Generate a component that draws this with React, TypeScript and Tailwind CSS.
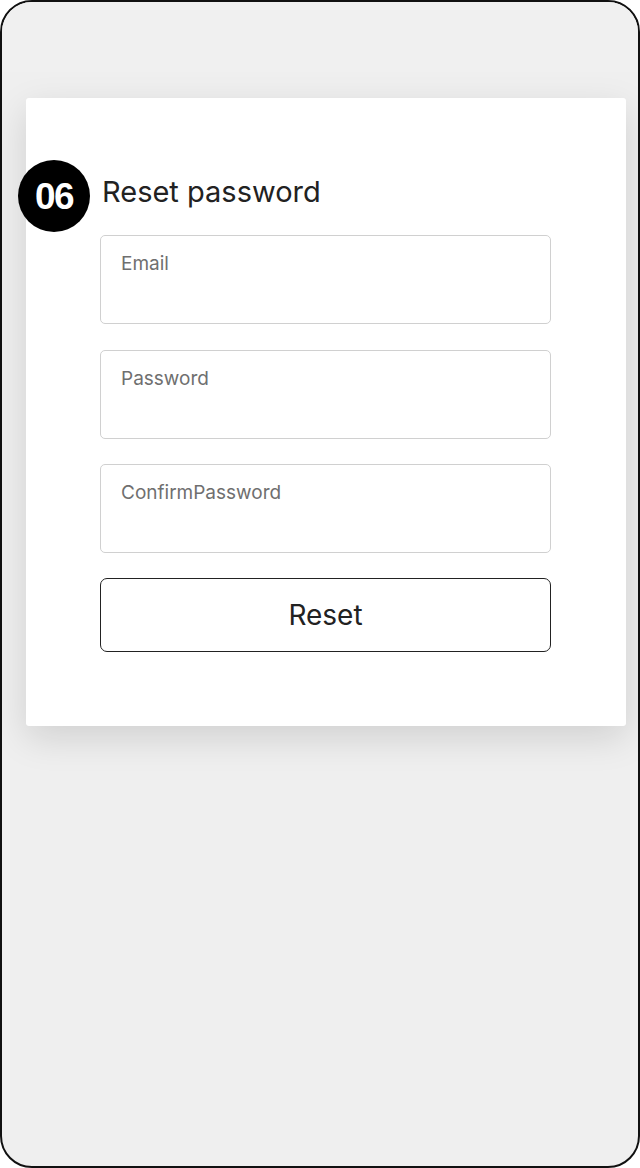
export default function App() {
  const fields = ['Email', 'Password', 'ConfirmPassword']

  return (
    <div className="h-[1168px] w-[640px] bg-white">
      <div className="flex h-full w-full flex-col overflow-hidden rounded-[32px] border-2 border-[#111] bg-[#efefef] font-['Inter','Roboto',sans-serif]">
        {/* top bar */}
        <div className="relative z-10 h-[70px] shrink-0 bg-[#f0f0f0]" />

        {/* card */}
        <div className="relative ml-[24px] mt-[26px] h-[628px] w-[600px] rounded-[3px] bg-white pl-[74px] pr-[74px] pt-[74px] shadow-[0_12px_36px_rgba(0,0,0,0.13)]">
          <div className="absolute left-[-8px] top-[62px] flex h-[72px] w-[72px] items-center justify-center rounded-full bg-black">
            <span className="font-['Liberation_Sans',Arial,sans-serif] text-[37px] font-bold leading-none tracking-[-1.5px] text-white">06</span>
          </div>

          <h1 className="ml-[2px] text-[29px] font-normal leading-[40px] text-[#222]">Reset password</h1>

          <div className="mt-[23px] flex flex-col gap-[25.5px]">
            {fields.map((f) => (
              <div
                key={f}
                className="h-[89px] w-[451px] rounded-[5px] border-[1.5px] border-[#d0d0d0] px-[20px] pt-[15px] text-[19px] leading-[26px] text-[#6f6f6f]"
              >
                {f}
              </div>
            ))}
          </div>

          <button className="mt-[25px] flex h-[74px] w-[451px] items-center justify-center rounded-[7px] border-[1.5px] border-[#222] bg-white text-[28px] text-[#222]">
            Reset
          </button>
        </div>
      </div>
    </div>
  )
}
